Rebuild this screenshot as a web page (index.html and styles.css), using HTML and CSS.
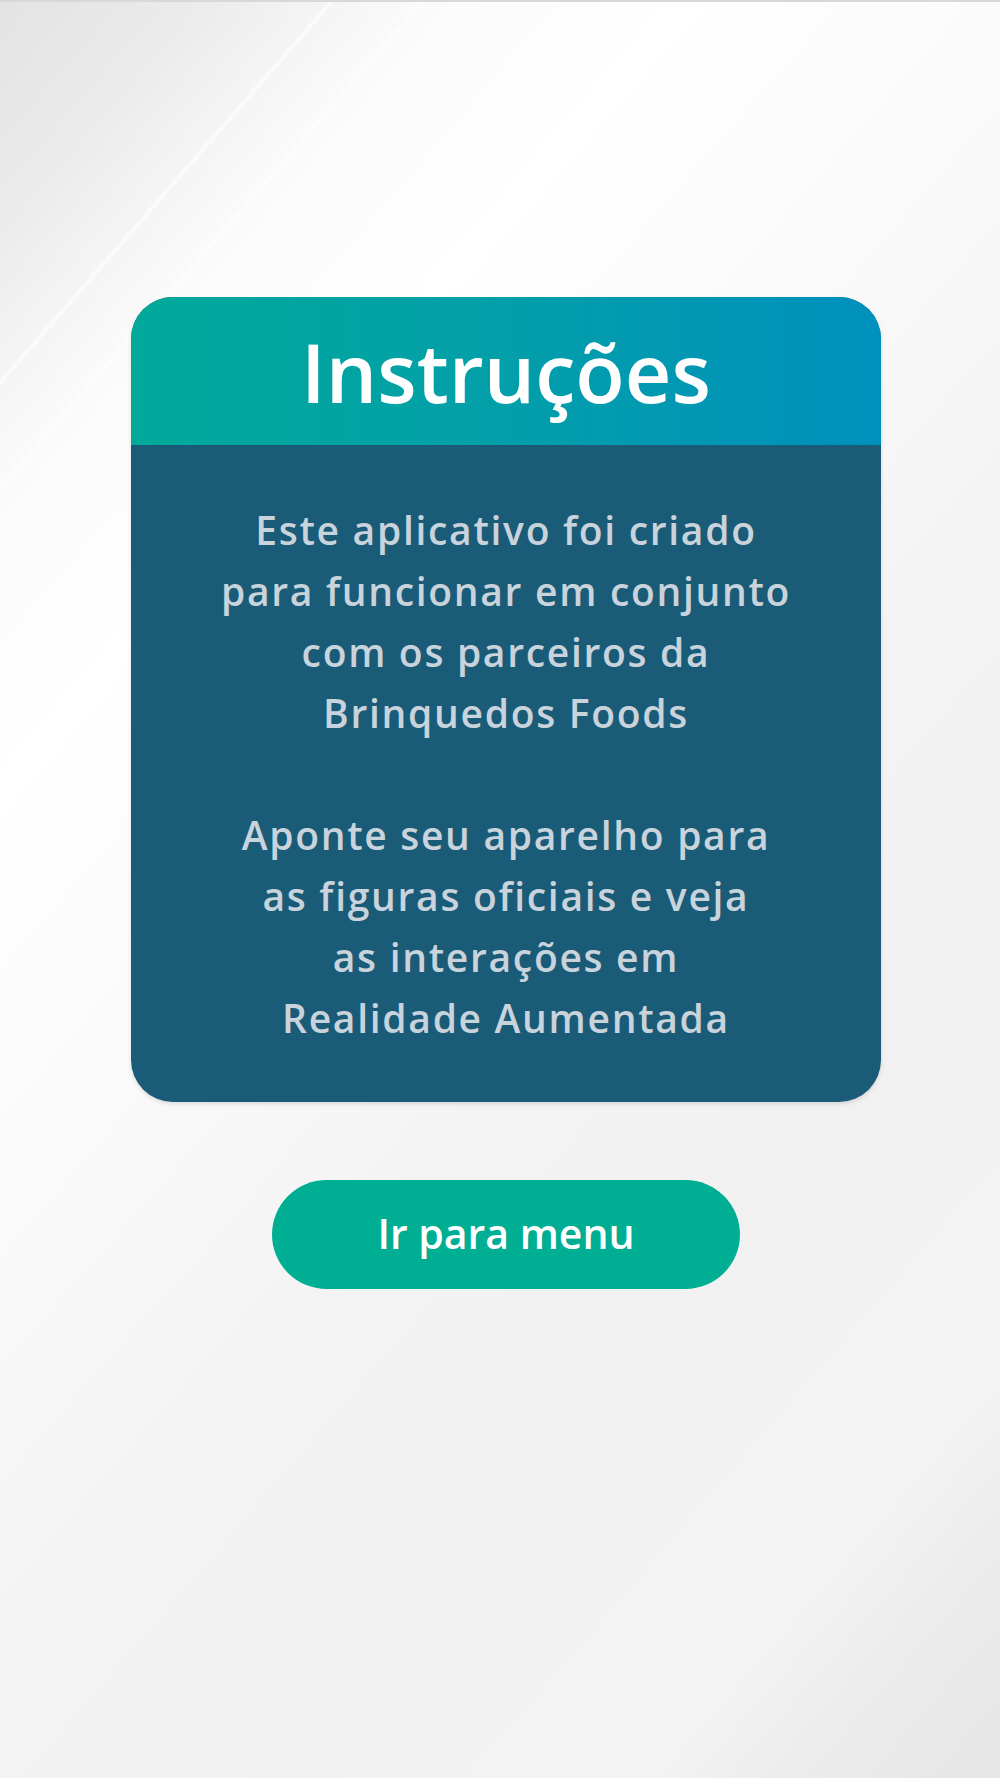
FILE: index.html
```html
<!DOCTYPE html>
<html lang="pt-BR">
<head>
<meta charset="utf-8">
<title>Instruções</title>
<link rel="stylesheet" href="styles.css">
</head>
<body>
<main class="page">
  <section class="card">
    <header class="card-header">
      <h1 class="card-title">Instruções</h1>
    </header>
    <div class="card-body">
      <p class="para">Este aplicativo foi criado<br>para funcionar em conjunto<br>com os parceiros da<br>Brinquedos Foods</p>
      <p class="para">Aponte seu aparelho para<br>as figuras oficiais e veja<br>as interações em<br>Realidade Aumentada</p>
    </div>
  </section>
  <button class="menu-btn" type="button">Ir para menu</button>
</main>
</body>
</html>
```
FILE: styles.css
```css
html, body {
  margin: 0;
  padding: 0;
}
body {
  width: 1000px;
  height: 1778px;
  overflow: hidden;
  font-family: "Open Sans", "Lato", sans-serif;
  background:
    linear-gradient(131deg, rgba(255,255,255,0) 248px, rgba(255,255,255,0.7) 251px, rgba(255,255,255,0) 255px),
    linear-gradient(131deg, rgba(255,255,255,0) 316px, rgba(255,255,255,0.5) 320px, rgba(255,255,255,0) 324px),
    linear-gradient(131deg, #e3e3e3 0px, #ebebeb 150px, #f5f5f5 255px, #fbfbfb 330px, #ffffff 520px, #fafafa 800px, #f3f3f3 1100px, #f1f1f1 1400px, #f4f4f4 1640px, #ececec 1760px, #e6e6e6 1921px);
  border-top: 2px solid #d8d8d8;
  box-sizing: border-box;
}
.page {
  display: flex;
  flex-direction: column;
  align-items: center;
  padding-top: 295px;
  padding-left: 12px;
}
.card {
  width: 750px;
  height: 805px;
  border-radius: 42px;
  overflow: hidden;
  background: #1a5c78;
  box-shadow: 0 2px 4px rgba(0,0,0,0.12);
}
.card-header {
  height: 148px;
  background: linear-gradient(90deg, #00a99a 0%, #03a0a8 45%, #0090bd 100%);
  display: flex;
  align-items: center;
  justify-content: center;
}
.card-title {
  margin: 0;
  color: #ffffff;
  font-size: 81px;
  font-weight: 600;
  line-height: 1;
}
.card-body {
  padding-top: 54px;
  display: flex;
  flex-direction: column;
  gap: 61px;
  align-items: center;
}
.para {
  margin: 0;
  color: #c9d3dc;
  font-size: 39px;
  font-weight: 600;
  letter-spacing: 1.7px;
  line-height: 61px;
  text-align: center;
}
.menu-btn {
  margin-top: 78px;
  width: 468px;
  height: 109px;
  border: none;
  border-radius: 55px;
  background: #00ae94;
  color: #ffffff;
  font-family: "Open Sans", "Lato", sans-serif;
  font-size: 41px;
  font-weight: 600;
  padding: 0 0 4px;
}
```
